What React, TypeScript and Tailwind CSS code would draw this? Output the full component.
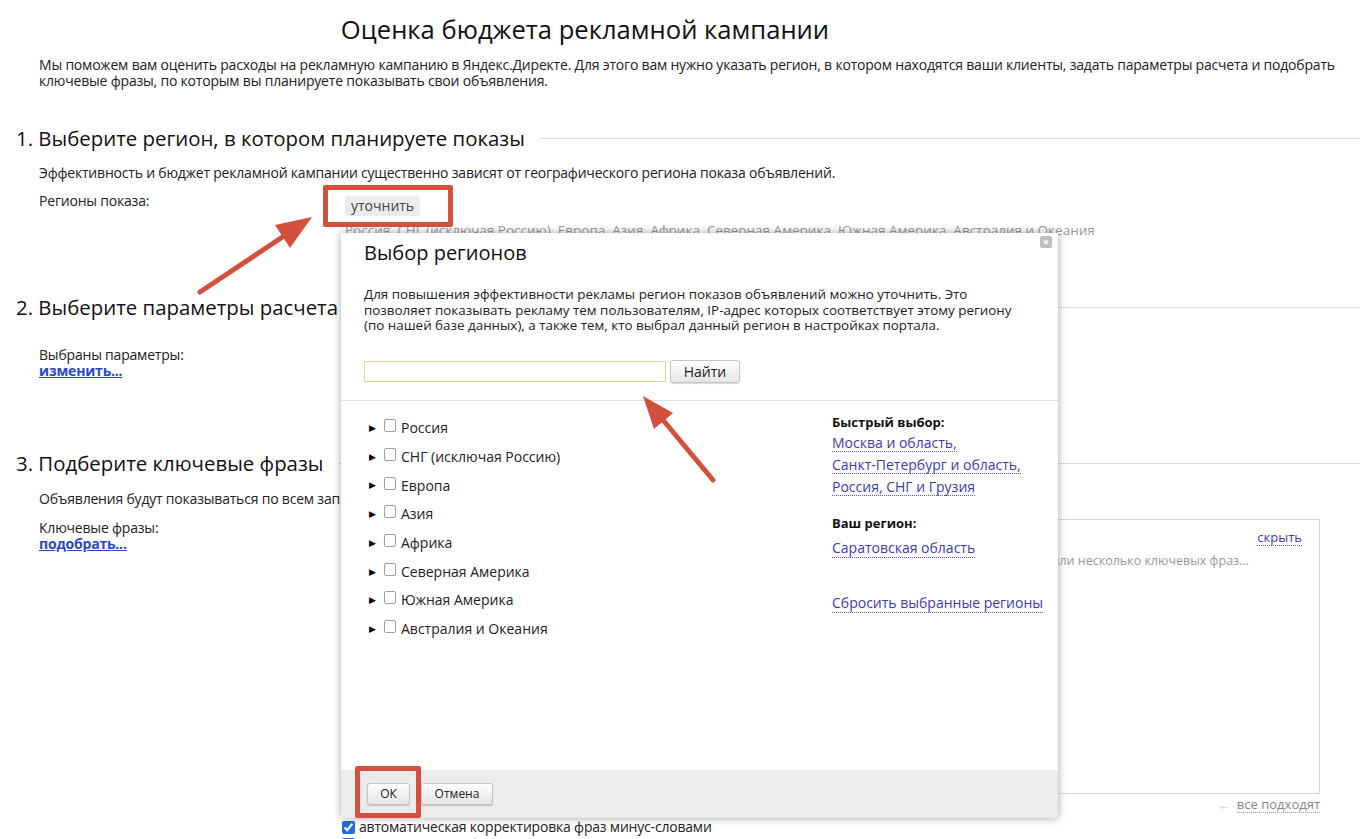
import React from "react";

const regions = [
  "Россия",
  "СНГ (исключая Россию)",
  "Европа",
  "Азия",
  "Африка",
  "Северная Америка",
  "Южная Америка",
  "Австралия и Океания",
];

const quickPicks = ["Москва и область,", "Санкт-Петербург и область,", "Россия, СНГ и Грузия"];

function SectionTitle({ children }: { children: React.ReactNode }) {
  return (
    <div className="flex items-center pl-[16px]">
      <h2 className="text-[20.4px] leading-[28px] text-[#111] whitespace-nowrap">{children}</h2>
      <div className="ml-[15px] h-px flex-1 bg-[#dcdcdc]" />
    </div>
  );
}

function DottedLink({ children }: { children: React.ReactNode }) {
  return (
    <a href="#" className="text-[#3b3bb3] border-b border-dotted border-[#5a5ad0] leading-[17px]">
      {children}
    </a>
  );
}

function RegionPicker() {
  return (
    <div className="absolute left-[341px] top-[233px] w-[717px] h-[585px] bg-white flex flex-col shadow-[0_0_8px_rgba(0,0,0,0.35)]">
      {/* close */}
      <button className="absolute right-[6px] top-[3px] w-[12px] h-[12px] rounded-[2px] bg-[#bdbdbd] text-white text-[11px] leading-[12px] font-bold flex items-center justify-center">
        ×
      </button>

      <div className="px-[23px] pt-[7px]">
        <h3 className="text-[20px] leading-[26px] text-[#111]">Выбор регионов</h3>
        <p className="mt-[21px] text-[13.4px] leading-[15.5px] text-[#222] whitespace-nowrap">
          Для повышения эффективности рекламы регион показов объявлений можно уточнить. Это
          <br />
          позволяет показывать рекламу тем пользователям, IP-адрес которых соответствует этому региону
          <br />
          (по нашей базе данных), а также тем, кто выбрал данный регион в настройках портала.
        </p>
        <div className="mt-[26px] flex items-center gap-[4px]">
          <input className="w-[302px] h-[21px] border border-[#e3d49a] bg-white outline-none" />
          <button className="w-[70px] h-[23px] rounded-[3px] border border-[#c4c4c4] bg-gradient-to-b from-white to-[#e6e6e6] text-[14px] text-[#222] shadow-[0_1px_1px_rgba(0,0,0,0.15)]">
            Найти
          </button>
        </div>
      </div>

      <div className="mt-[17px] h-px bg-[#dedede]" />

      <div className="flex flex-1">
        <ul className="pl-[28px] pt-[13px] w-[491px]">
          {regions.map((r) => (
            <li key={r} className="flex items-center h-[28.7px] text-[14px] text-[#222]">
              <span className="text-[9px] w-[15px] text-black">▶</span>
              <span className="w-[12px] h-[13px] rounded-[2px] border border-[#a0a0a0] bg-white mr-[5px] -mt-[4px]" />
              <span>{r}</span>
            </li>
          ))}
        </ul>
        <div className="pt-[12px] text-[14px]">
          <div className="text-[13px] font-bold text-[#111] leading-[18px]">Быстрый выбор:</div>
          <div className="mt-[3px] flex flex-col gap-[4px] items-start">
            {quickPicks.map((q) => (
              <DottedLink key={q}>{q}</DottedLink>
            ))}
          </div>
          <div className="mt-[18px] text-[13px] font-bold text-[#111] leading-[18px]">Ваш регион:</div>
          <div className="mt-[5px]">
            <DottedLink>Саратовская область</DottedLink>
          </div>
          <div className="mt-[34px]">
            <DottedLink>Сбросить выбранные регионы</DottedLink>
          </div>
        </div>
      </div>

      <div className="h-[48px] bg-[#ececec] flex items-center gap-[11px] pl-[26px]">
        <button className="w-[43px] h-[22px] rounded-[3px] border border-[#c4c4c4] bg-gradient-to-b from-white to-[#e4e4e4] text-[12px] text-[#222] shadow-[0_1px_1px_rgba(0,0,0,0.2)]">
          ОК
        </button>
        <button className="w-[72px] h-[22px] rounded-[3px] border border-[#c4c4c4] bg-gradient-to-b from-white to-[#e4e4e4] text-[12px] text-[#222] shadow-[0_1px_1px_rgba(0,0,0,0.2)]">
          Отмена
        </button>
      </div>
    </div>
  );
}

export default function App() {
  return (
    <div className="relative w-[1360px] h-[839px] overflow-hidden bg-white text-[#222] font-['Open_Sans',sans-serif]">
      <div className="w-[1170px] pt-[15px] text-center">
        <h1 className="text-[25.6px] leading-[30px] text-[#111]">Оценка бюджета рекламной кампании</h1>
      </div>

      <p className="mt-[12px] pl-[39px] pr-[20px] text-[14px] leading-[16px] tracking-[-0.2px]">
        Мы поможем вам оценить расходы на рекламную кампанию в Яндекс.Директе. Для этого вам нужно указать регион, в
        котором находятся ваши клиенты, задать параметры расчета и подобрать ключевые фразы, по которым вы планируете
        показывать свои объявления.
      </p>

      {/* 1. регион */}
      <div className="mt-[35px]">
        <SectionTitle>1. Выберите регион, в котором планируете показы</SectionTitle>
        <p className="mt-[13px] pl-[39px] text-[14px] leading-[16px] tracking-[-0.2px]">
          Эффективность и бюджет рекламной кампании существенно зависят от географического региона показа объявлений.
        </p>
        <div className="mt-[12px] flex">
          <div className="w-[345px] pl-[39px] text-[14px] leading-[16px] tracking-[-0.2px]">Регионы показа:</div>
          <div>
            <button className="h-[20px] px-[6px] rounded-[2px] bg-[#ececec] text-[14px] leading-[20px] text-[#444]">
              уточнить
            </button>
            <div className="mt-[5px] text-[13.5px] leading-[16px] text-[#9a9a9a] whitespace-nowrap">
              Россия, СНГ (исключая Россию), Европа, Азия, Африка, Северная Америка, Южная Америка, Австралия и Океания
            </div>
          </div>
        </div>
      </div>

      {/* 2. параметры */}
      <div className="mt-[55px]">
        <SectionTitle>2. Выберите параметры расчета</SectionTitle>
        <div className="mt-[26px] pl-[39px] text-[14px] leading-[16px] tracking-[-0.2px]">
          <div>Выбраны параметры:</div>
          <a href="#" className="font-bold text-[#2a47d0] underline">
            изменить...
          </a>
        </div>
      </div>

      {/* 3. фразы */}
      <div className="mt-[70px]">
        <SectionTitle>3. Подберите ключевые фразы</SectionTitle>
        <p className="mt-[14px] pl-[39px] text-[14px] leading-[16px] tracking-[-0.2px]">
          Объявления будут показываться по всем запросам, содержащим ключевые фразы.
        </p>
        <div className="mt-[12px] flex">
          <div className="w-[345px] pt-[1px] pl-[39px] text-[14px] leading-[16px] tracking-[-0.2px]">
            <div>Ключевые фразы:</div>
            <a href="#" className="font-bold text-[#2a47d0] underline">
              подобрать...
            </a>
          </div>
          <div>
            <div className="w-[975px] h-[275px] border border-[#d8d8d8] flex flex-col">
              <div className="flex justify-end pr-[17px] pt-[10px]">
                <a href="#" className="text-[13px] text-[#3b3bb3] border-b border-dotted border-[#5a5ad0] leading-[15px]">
                  скрыть
                </a>
              </div>
              <div className="flex justify-end pr-[70px] pt-[7px] text-[12.5px] leading-[16px] text-[#999]">
                Введите в поле одну или несколько ключевых фраз...
              </div>
            </div>
            <div className="flex justify-end items-center mt-[2px] text-[13px] text-[#888] leading-[16px]">
              <span className="mr-[6px] text-[#c8c8c8]">←</span>
              <span className="border-b border-dotted border-[#999]">все подходят</span>
            </div>
            <label className="mt-[6px] -ml-[3px] flex items-center gap-[4px] text-[14px] leading-[16px] tracking-[-0.2px]">
              <input type="checkbox" defaultChecked className="w-[13px] h-[13px] accent-[#1e6fd9]" />
              автоматическая корректировка фраз минус-словами
            </label>
            <label className="mt-[1px] -ml-[3px] flex items-center gap-[4px] text-[14px] leading-[16px] tracking-[-0.2px]">
              <input type="checkbox" defaultChecked className="w-[13px] h-[13px] accent-[#1e6fd9]" />
              автоматическая фильтрация
            </label>
          </div>
        </div>
      </div>

      <RegionPicker />

      {/* выделения */}
      <div className="absolute left-[323px] top-[185px] w-[130px] h-[42px] border-[5px] border-[#d4503e] rounded-[2px] pointer-events-none" />
      <div className="absolute left-[355px] top-[766px] w-[66px] h-[52px] border-[5px] border-[#d4503e] rounded-[2px] pointer-events-none" />

      <svg className="absolute inset-0 pointer-events-none" width="1360" height="839">
        <line x1="200" y1="292" x2="284" y2="236" stroke="#d4503e" strokeWidth="5" strokeLinecap="round" />
        <polygon points="312,217 290,248 275,225" fill="#d4503e" />
        <line x1="713" y1="480" x2="663" y2="420" stroke="#d4503e" strokeWidth="5" strokeLinecap="round" />
        <polygon points="643,396 673,413 654,429" fill="#d4503e" />
      </svg>
    </div>
  );
}
